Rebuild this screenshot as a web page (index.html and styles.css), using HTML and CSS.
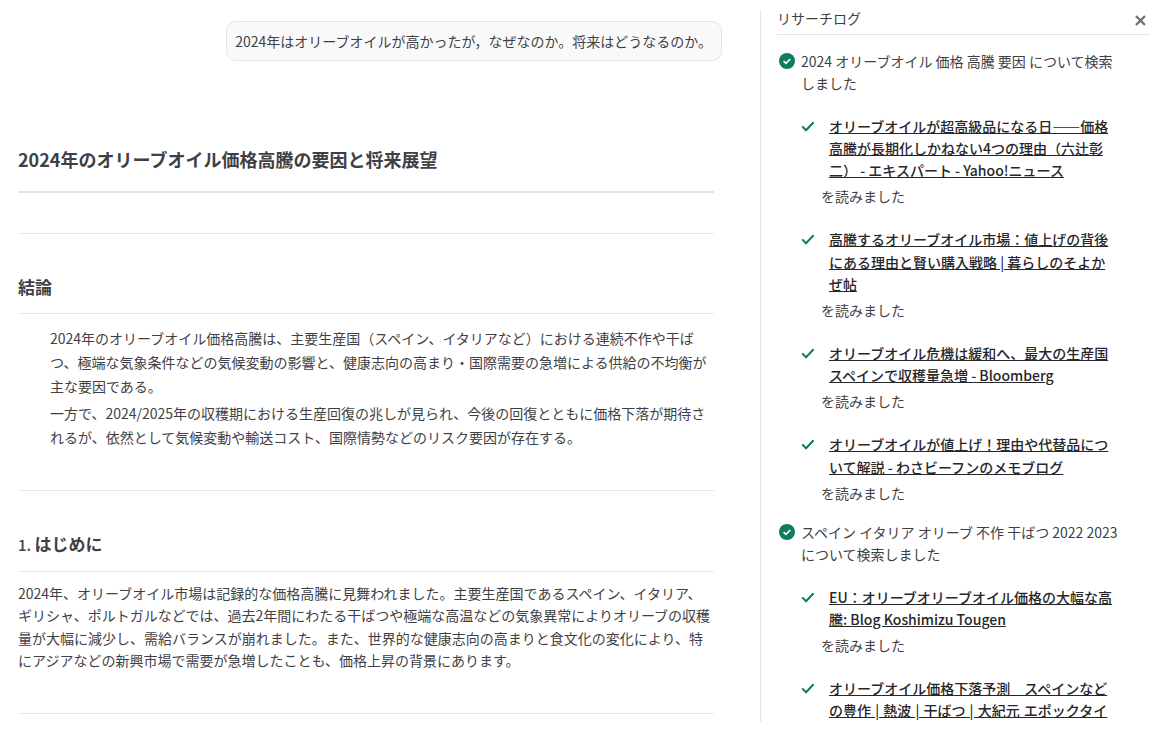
FILE: index.html
```html
<!DOCTYPE html>
<html lang="ja">
<head>
<meta charset="utf-8">
<title>リサーチログ</title>
<link rel="stylesheet" href="styles.css">
</head>
<body>
<div class="app">
  <main class="chat">
    <div class="bubble-row"><div class="bubble">2024年はオリーブオイルが高かったが，なぜなのか。将来はどうなるのか。</div></div>
    <article class="doc">
      <h1>2024年のオリーブオイル価格高騰の要因と将来展望</h1>
      <hr class="first">
      <h2>結論</h2>
      <blockquote>
        <p>2024年のオリーブオイル価格高騰は、主要生産国（スペイン、イタリアなど）における連続不作や干ばつ、極端な気象条件などの気候変動の影響と、健康志向の高まり・国際需要の急増による供給の不均衡が主な要因である。</p>
        <p>一方で、2024/2025年の収穫期における生産回復の兆しが見られ、今後の回復とともに価格下落が期待されるが、依然として気候変動や輸送コスト、国際情勢などのリスク要因が存在する。</p>
      </blockquote>
      <hr>
      <h2><span class="num">1. </span>はじめに</h2>
      <p class="body">2024年、オリーブオイル市場は記録的な価格高騰に見舞われました。主要生産国であるスペイン、イタリア、ギリシャ、ポルトガルなどでは、過去2年間にわたる干ばつや極端な高温などの気象異常によりオリーブの収穫量が大幅に減少し、需給バランスが崩れました。また、世界的な健康志向の高まりと食文化の変化により、特にアジアなどの新興市場で需要が急増したことも、価格上昇の背景にあります。</p>
      <hr>
    </article>
  </main>
  <aside class="log">
    <header class="log-head">
      <span>リサーチログ</span>
      <svg class="close" viewBox="0 0 11 11" width="11" height="11" aria-hidden="true"><path d="M1 1l9 9M10 1l-9 9"/></svg>
    </header>
    <div class="search">
      <svg class="badge" viewBox="0 0 16 16" width="16" height="16" aria-hidden="true"><circle cx="8" cy="8" r="8"/><path d="M4.6 8.2l2.3 2.2 4.4-4.4"/></svg>
      <div>2024 オリーブオイル 価格 高騰 要因 について検索しました</div>
    </div>
    <div class="read">
      <svg class="tick" viewBox="0 0 14 12" width="14" height="12" aria-hidden="true"><path d="M1.2 6.4l3.8 3.8 7.6-8"/></svg>
      <a href="#">オリーブオイルが超高級品になる日――価格高騰が長期化しかねない4つの理由（六辻彰二） - エキスパート - Yahoo!ニュース</a>
      <div class="note">を読みました</div>
    </div>
    <div class="read">
      <svg class="tick" viewBox="0 0 14 12" width="14" height="12" aria-hidden="true"><path d="M1.2 6.4l3.8 3.8 7.6-8"/></svg>
      <a href="#">高騰するオリーブオイル市場：値上げの背後にある理由と賢い購入戦略 | 暮らしのそよかぜ帖</a>
      <div class="note">を読みました</div>
    </div>
    <div class="read">
      <svg class="tick" viewBox="0 0 14 12" width="14" height="12" aria-hidden="true"><path d="M1.2 6.4l3.8 3.8 7.6-8"/></svg>
      <a href="#">オリーブオイル危機は緩和へ、最大の生産国スペインで収穫量急増 - Bloomberg</a>
      <div class="note">を読みました</div>
    </div>
    <div class="read">
      <svg class="tick" viewBox="0 0 14 12" width="14" height="12" aria-hidden="true"><path d="M1.2 6.4l3.8 3.8 7.6-8"/></svg>
      <a href="#">オリーブオイルが値上げ！理由や代替品について解説 - わさビーフンのメモブログ</a>
      <div class="note">を読みました</div>
    </div>
    <div class="search">
      <svg class="badge" viewBox="0 0 16 16" width="16" height="16" aria-hidden="true"><circle cx="8" cy="8" r="8"/><path d="M4.6 8.2l2.3 2.2 4.4-4.4"/></svg>
      <div>スペイン イタリア オリーブ 不作 干ばつ 2022 2023 について検索しました</div>
    </div>
    <div class="read">
      <svg class="tick" viewBox="0 0 14 12" width="14" height="12" aria-hidden="true"><path d="M1.2 6.4l3.8 3.8 7.6-8"/></svg>
      <a href="#">EU：オリーブオリーブオイル価格の大幅な高騰: Blog Koshimizu Tougen</a>
      <div class="note">を読みました</div>
    </div>
    <div class="read">
      <svg class="tick" viewBox="0 0 14 12" width="14" height="12" aria-hidden="true"><path d="M1.2 6.4l3.8 3.8 7.6-8"/></svg>
      <a class="spaced" href="#">オリーブオイル価格下落予測　スペインなどの豊作 | 熱波 | 干ばつ | 大紀元 エポックタイムズ</a>
      <div class="note">を読みました</div>
    </div>
  </aside>
</div>
</body>
</html>
```
FILE: styles.css
```css
* { box-sizing: border-box; }
html, body { margin: 0; height: 100%; overflow: hidden; background: #fff; }
body { font-family: "Noto Sans CJK JP", "Noto Sans", sans-serif; font-size: 14px; color: #3f3f46; }
.app { display: flex; height: 740px; }
.chat { width: 760px; flex: none; padding: 21px 46px 0 18px; overflow: hidden; }
.bubble-row { display: flex; justify-content: flex-end; margin-right: -8px; }
.bubble { height: 40px; padding: 0 9px 0 8px; display: flex; align-items: center; background: #f9f9f9; border: 1px solid #e5e5e5; border-radius: 10px; white-space: nowrap; }
h1 { margin: 84px 0 0; padding-bottom: 18px; font-size: 18px; line-height: 28px; font-weight: 700; color: #3f3f46; border-bottom: 2px solid #e4e4e7; }
hr { margin: 0; border: 0; border-top: 1px solid #e8e8e8; }
hr.first { margin-top: 40px; }
h2 { margin: 40px 0 0; padding-bottom: 13px; font-size: 17px; line-height: 26px; font-weight: 700; color: #3f3f46; border-bottom: 1px solid #e8e8e8; }
.num { font-size: 15px; font-weight: 500; }
blockquote { margin: 13px 0 0; padding-left: 32px; }
blockquote p { margin: 0; line-height: 23.8px; }
blockquote p + p { margin-top: 4px; }
blockquote + hr { margin-top: 40px; }
.body { margin: 10px 0 0; line-height: 22.4px; }
.body + hr { margin-top: 41px; }
.log { width: 401px; flex: none; height: 712px; margin-top: 10px; border-left: 1px solid #e4e4e7; padding: 0 11px 0 16px; clip-path: inset(-5px 0 0 0); }
.log-head { display: flex; justify-content: space-between; align-items: flex-start; height: 25px; line-height: 16px; border-bottom: 1px solid #e4e4e7; padding-right: 4px; }
.close { margin-top: 5px; fill: none; stroke: #71717a; stroke-width: 2.4; }
.search { display: flex; gap: 6px; padding-right: 27px; margin: 15px 0 0 2px; line-height: 22.4px; }
.badge { flex: none; margin-top: 3px; }
.badge circle { fill: #0f7b5f; }
.badge path { fill: none; stroke: #fff; stroke-width: 1.7; }
.read { position: relative; margin: 20.6px 36px 0 24px; }
.read a { display: block; padding-left: 28px; font-weight: 500; line-height: 22.4px; color: #27272a; text-decoration: underline; }
.read a.spaced { word-spacing: 1px; }
.tick { position: absolute; left: 0; top: 5px; fill: none; stroke: #0f7b5f; stroke-width: 2; }
.note { margin: 3.5px 0 0 20px; line-height: 22.4px; color: #3f3f46; }
.search + .read { margin-top: 19.8px; }
.read + .search { margin-top: 17px; }
```
